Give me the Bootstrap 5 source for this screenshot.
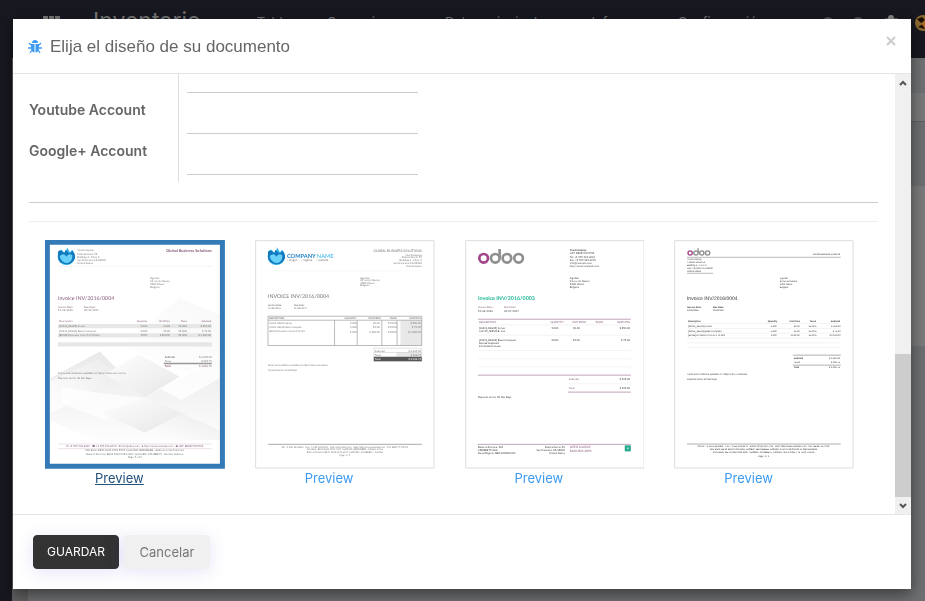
<!DOCTYPE html>
<html lang="es">
<head>
<meta charset="utf-8">
<meta name="viewport" content="width=device-width, initial-scale=1">
<title>Elija el diseño de su documento</title>
<link href="https://cdn.jsdelivr.net/npm/bootstrap@5.3.0/dist/css/bootstrap.min.css" rel="stylesheet">
<style>
body{font-family:Inter,"Open Sans",sans-serif;font-size:13px;color:#666;background:#6e7072;overflow:hidden}
.app-bar{background:#181821;height:58px;color:#777;font-size:13px;padding:15px 0 0 43px;white-space:nowrap}
.app-bar a{color:inherit;text-decoration:none;line-height:20px}
.app-bar .brand-name{font-size:23px;line-height:20px;margin:-4px 56px 0 33px}
.app-links{gap:24px;margin-top:-3px}
.app-bar svg{flex:none}
.app-side{width:12px;background:#181821}
.app-gutter{width:16px;background:#606060}
.app-tools{height:64px;background:#7b7b7b;border-bottom:1px solid #606060;border-top:35px solid #707274}
.app-sheet{margin-top:64px;height:160px;background:#7c7c7c}
.doc-dialog{max-width:none;margin:19px 14px 12px 13px;height:calc(100% - 31px)}
.doc-dialog .modal-content{border:0;border-radius:0;height:100%;box-shadow:0 5px 15px rgba(0,0,0,.5);color:#666}
.doc-dialog .modal-header{height:55px;padding:2px 15px 0;border-bottom:1px solid #e5e5e5;border-radius:0}
.doc-dialog .modal-title{font:400 17px/24px "Liberation Sans",Arial,sans-serif;color:#666}
.close-x{border:0;background:none;padding:0;color:#ccc;line-height:0;margin:0 0 12px}
.doc-dialog .modal-body{padding:0;overflow:hidden}
.doc-scroll{padding:0 17px 0 16px}
.labels-col{width:150px;border-right:1px solid #ddd;padding-top:19px}
.labels-col label{font-size:14px;font-weight:600;height:41px;line-height:33px;display:block;white-space:nowrap}
.fields-col{width:239px;padding:0 0 7px 8px}
.fields-col input{display:block;width:100%;height:41px;border:0;border-bottom:1px solid #ccc;border-radius:0;outline:0}
.fields-col input.cut{height:19px}
.rule-a{margin:20px 0 18px;border-top:1px solid #ccc;opacity:1}
.rule-b{margin:0 0 18px;border-top:1px solid #eee;opacity:1}
.layouts{margin:0 9px 0 1px}
.layouts .col-3{padding:0 15px}
.layouts svg{display:block;width:100%;height:auto;background:#fff}
.layouts a{display:inline-block;color:#3d9cf2;text-decoration:none;font-size:13px;line-height:18px;margin-right:31px}
.layouts a.picked{color:#23527c;text-decoration:underline}
.bar-track{width:16px;background:#f0f0f0}
.bar-track button{border:0;background:none;padding:0;height:17px;width:16px;line-height:0}
.bar-thumb{background:#cdcdcd;height:143px}
.doc-dialog .modal-footer{height:75px;padding:0 20px;border-top:1px solid #e5e5e5;border-radius:0;gap:5px}
.btn-doc{font-size:12px;line-height:20px;height:34px;min-width:86px;padding:6px 13px;margin:0;border:1px solid #333;border-radius:4px;background:#333;color:#fff;box-shadow:0 3px 18px rgba(88,60,200,.14)}
.btn-doc.soft{font-size:13px;background:#f0f0f0;border-color:#f0f0f0;color:#777}
.doc-art{font-family:Lato,sans-serif;font-size:8px;fill:#777;text-rendering:geometricPrecision}
.doc-art .e{text-anchor:end}
.doc-art .m{text-anchor:middle}
.doc-art .b{font-weight:700}
.doc-art .p{fill:#875a7b}
.doc-art .logo-name{font-size:17px;font-weight:700;fill:#2585c7}
.doc-art.sans{font-family:"Liberation Sans",Arial,sans-serif}
</style>
</head>
<body>
<div class="vh-100 d-flex flex-column">
  <nav class="app-bar d-flex align-items-start">
    <svg width="17" height="17" viewBox="0 0 17 17" fill="#777"><path d="M0 1h5v4H0zM6 1h5v4H6zM12 1h5v4h-5zM0 7h5v4H0zM6 7h5v4H6zM12 7h5v4h-5z"/></svg>
    <a href="#" class="brand-name">Inventario</a>
    <div class="app-links d-flex flex-fill">
      <a href="#">Tablero</a><a href="#" class="me-3">Operaciones</a><a href="#" class="me-3">Datos principales</a><a href="#" class="me-2">Informes</a><a href="#">Configuración</a>
    </div>
    <svg width="104" height="18" viewBox="0 0 104 18"><g fill="none" stroke="#555" stroke-width="2"><circle cx="7" cy="8" r="5"/><circle cx="37" cy="8" r="5"/></g><path d="M64 3h13v3H64z" fill="#555"/><circle cx="70" cy="3" r="3" fill="#888"/><circle cx="102" cy="8" r="8" fill="#8b6b30"/><path d="M96 4l5-2 3 3-4 3zM97 12l5-3 2 5z" fill="#1c0d02"/><path d="M101 10l3-5v8z" fill="#b4651c"/></svg>
  </nav>
  <div class="d-flex flex-fill">
    <div class="app-side"></div><div class="app-gutter"></div>
    <div class="flex-fill"><div class="app-tools"></div><div class="app-sheet"></div></div>
  </div>
</div>

<div class="modal d-block overflow-hidden" role="dialog" aria-labelledby="dlgTitle">
<div class="modal-dialog doc-dialog">
<div class="modal-content">
  <div class="modal-header d-flex align-items-center justify-content-between">
    <div class="d-flex align-items-center">
      <svg class="me-2" width="14" height="14" viewBox="0 0 14 14"><path d="M4 3a3 3 0 0 1 6 0zM3 4h3.500v8.500Q3 12 3 8zM7.500 4H11v4q0 4-3.500 4.500z" fill="#3d9cf2"/><path d="M3 5L1 3M11 5l2-2M3 8H0M11 8h3M4 10l-2 3M10 10l2 3" stroke="#3d9cf2" stroke-width="1.300" fill="none"/></svg>
      <h4 class="modal-title" id="dlgTitle">Elija el diseño de su documento</h4>
    </div>
    <button class="close-x" type="button" aria-label="Cerrar"><svg width="10" height="10" viewBox="0 0 10 10"><path d="M1 1l8 8M9 1L1 9" stroke="#ccc" stroke-width="2"/></svg></button>
  </div>
  <div class="modal-body d-flex">
    <div class="doc-scroll flex-fill">
      <div class="d-flex">
        <div class="labels-col"><label for="yt">Youtube Account</label><label for="gp">Google+ Account</label></div>
        <div class="fields-col"><input class="cut" type="text" aria-label="Account"><input id="yt" type="text"><input id="gp" type="text"></div>
      </div>
      <hr class="rule-a"><hr class="rule-b">
      <div class="layouts row text-center">
        <div class="col-3">
          <svg class="doc-art" viewBox="15 15 540 687">
            <defs>
              <linearGradient id="fade" x1="0" y1="0" x2="1" y2="1"><stop offset="0" stop-color="#fff"/><stop offset="1" stop-color="#e6e6e6"/></linearGradient>
              <linearGradient id="fadeDown" x1="0" y1="0" x2="0" y2="1"><stop offset="0" stop-color="#e9e9e9"/><stop offset="1" stop-color="#fff"/></linearGradient>
              <linearGradient id="fadeUp" x1="0" y1="1" x2="1" y2="0"><stop offset="0" stop-color="#fff"/><stop offset="1" stop-color="#ececec"/></linearGradient>
              <g id="drop"><circle cx="79" cy="64" r="26" fill="#35b4ee"/><path d="M50 38h58v14l-8-12-10 12-8-14-8 16-14-14-10 8z" fill="#fff"/><path d="M54 50q8-8 18 4 4-2 3-9 8 2 11 10 8 0 11-8 10 10 8 23-9 20-28 18-22-4-23-22z" fill="#1279be"/><path d="M59 63q14-11 20 2 8-12 18-4 2 18-16 24-18-2-22-22z" fill="#69d0f8"/></g>
              <g id="odoo" fill="none" stroke="#8f8f8f" stroke-width="8"><circle cx="71" cy="70" r="13" stroke="#a24689"/><circle cx="106" cy="70" r="13"/><path d="M119 42v28"/><circle cx="141" cy="70" r="13"/><circle cx="176" cy="70" r="13"/></g>
            </defs>
            <path d="M30 30h510v657H30z" fill="#fff"/>
            <path d="M250 330L420 190 540 240V440L400 400z" fill="url(#fadeUp)" opacity=".35"/>
            <path d="M30 430l150-80 135 138 110-58 115-66v220q-110 40-230 60-160-20-280-90z" fill="url(#fadeDown)"/>
            <path d="M30 440l145-65 50 40-90 70-105 50z" fill="url(#fadeUp)"/>
            <path d="M65 455l115 20 135 15-120 66-130-50z" fill="#fff" opacity=".7"/>
            <path d="M195 418l100-60 125 68-105 62z" fill="url(#fade)"/>
            <path d="M185 535l130-47 120 50-120 56z" fill="url(#fade)"/>
            <path d="M420 426l120-66v70l-115 66-62-32z" fill="#fff" opacity=".8"/>
            <path d="M315 594l110-58 115 50v30H370z" fill="url(#fadeUp)"/>
            <use href="#drop"/>
            <text><tspan x="112" y="49">YourCompany</tspan><tspan x="112" y="59">Federal Street 51</tspan><tspan x="112" y="68">Building 2 - Floor 2</tspan><tspan x="112" y="78">San Francisco CA 94000</tspan><tspan x="112" y="87">United States</tspan></text>
            <text class="e p b" x="516" y="52" font-size="12">Global Business Solutions</text>
            <path d="M54 94h462" stroke="#ddd"/>
            <text><tspan x="331" y="132">Agrolait</tspan><tspan x="331" y="141">69 rue de Namur</tspan><tspan x="331" y="151">1300 Wavre</tspan><tspan x="331" y="160">Belgium</tspan></text>
            <text class="p" x="54" y="196" font-size="16">Invoice INV/2016/0004</text>
            <text><tspan class="p" x="54" y="220">Invoice Date:</tspan><tspan class="p" x="132" y="220">Due Date:</tspan><tspan x="54" y="229">12/28/2016</tspan><tspan x="132" y="229">01/28/2017</tspan></text>
            <path d="M54 267h462v13H54zM54 295h462v13H54zM54 322h462v13H54z" fill="#ddd" opacity=".7"/>
            <g class="p"><text x="57" y="262">Description</text><text class="e" x="322" y="262">Quantity</text><text class="e" x="391" y="262">Unit Price</text><text class="e" x="442" y="262">Taxes</text><text class="e" x="514" y="262">Subtotal</text></g>
            <text><tspan x="57" y="276">[CONS_DEL01] Server</tspan><tspan x="57" y="290">[CONS_DEL03] Basic Computer</tspan><tspan x="57" y="304">[EPUB] Processor Core i5 2.70 Ghz</tspan></text>
            <g id="nums"><text class="e"><tspan x="322" y="276">5.000</tspan><tspan x="322" y="290">5.000</tspan><tspan x="322" y="304">1.000</tspan></text><text class="e"><tspan x="391" y="276">90.00</tspan><tspan x="391" y="290">15.00</tspan><tspan x="391" y="304">2,100.00</tspan></text><text class="e"><tspan x="442" y="276">15.00%</tspan><tspan x="442" y="290">15.00%</tspan><tspan x="442" y="304">15.00%</tspan></text><text class="e"><tspan x="514" y="276">$ 450.00</tspan><tspan x="514" y="290">$ 75.00</tspan><tspan x="514" y="304">$ 2,100.00</tspan></text></g>
            <path d="M372 386h144" stroke="#999" stroke-width="4"/>
            <text><tspan class="b" x="375" y="370">Subtotal</tspan><tspan x="375" y="383">Taxes</tspan><tspan class="p b" x="375" y="398">Total</tspan></text>
            <text class="e"><tspan x="516" y="370">$ 2,625.00</tspan><tspan x="516" y="383">$ 393.75</tspan><tspan class="p" x="516" y="398">$ 3,018.75</tspan></text>
            <text><tspan x="54" y="419">Terms and conditions available on https://odoo.com/terms</tspan><tspan x="54" y="433">Payment terms: 30 Net Days</tspan></text>
            <path d="M54 628h462M54 642h462" stroke="#bea3b6"/>
            <text class="m p" x="285" y="638">✆ +1 555 123 8069 &#160; ☎ +1 555 123 8070 &#160; ✉ info@odoo.com &#160; ● http://www.example.com &#160; ▣ VAT: BE0477472701</text>
            <text class="m"><tspan x="285" y="650">ING Bank: BE10 3631 0709 4104, SwiftCBIC: BBRUBEBB - Address in San Francisco</tspan><tspan x="285" y="660">Bank of America: BE74 1262 0121 6907, SwiftCBIC: CPHBBE75 - Another Address</tspan><tspan x="285" y="669">Page: 1 of 1</tspan></text>
            <path d="M22 22h526v673H22z" fill="none" stroke="#337ab7" stroke-width="15"/>
          </svg>
          <a href="#" class="picked">Preview</a>
        </div>
        <div class="col-3">
          <svg class="doc-art" viewBox="15 15 540 687">
            <use href="#drop"/>
            <text class="logo-name" x="111" y="68">COMPANY <tspan font-weight="400" fill="#35b4ee">NAME</tspan></text>
            <text x="111" y="79" font-size="9">/ slogan &#160; &#160; / tagline &#160; &#160; / website</text>
            <text class="e" x="516" y="51" font-size="10">GLOBAL BUSINESS SOLUTIONS</text>
            <text class="e"><tspan x="516" y="62">YourCompany</tspan><tspan x="516" y="70">Federal Street 51</tspan><tspan x="516" y="79">Building 2 - Floor 2</tspan><tspan x="516" y="87">San Francisco CA 94000</tspan><tspan x="516" y="95">United States</tspan></text>
            <path d="M54 107h462" stroke="#eee"/>
            <text><tspan x="331" y="131">Agrolait</tspan><tspan x="331" y="138">69 rue de Namur</tspan><tspan x="331" y="146">1300 Wavre</tspan><tspan x="331" y="154">Belgium</tspan></text>
            <text x="54" y="190" font-size="16">INVOICE INV/2016/0004</text>
            <text font-size="7"><tspan class="b" x="54" y="213">Invoice Date:</tspan><tspan class="b" x="132" y="213">Due Date:</tspan><tspan x="54" y="221">12/28/2016</tspan><tspan x="132" y="221">01/28/2017</tspan></text>
            <path d="M452 256h64v76h-64z" fill="#e8e8e8"/>
            <path d="M54 244h462v88H54zM54 256h462M254 256v76M322 256v76M396 256v76M442 256v76" fill="none" stroke="#999" stroke-width="2"/>
            <g class="b" font-size="7"><text x="57" y="253">DESCRIPTION</text><text class="e" x="320" y="253">QUANTITY</text><text class="e" x="393" y="253">UNIT PRICE</text><text class="e" x="441" y="253">TAXES</text><text class="e" x="514" y="253">SUBTOTAL</text></g>
            <text font-size="7"><tspan x="57" y="267">[CONS_DEL01] Server</tspan><tspan x="57" y="279">[CONS_DEL03] Basic Computer</tspan><tspan x="57" y="291">[EPUB] Processor Core i5 2.70 Ghz</tspan></text>
            <g transform="translate(-1 -10)"><use href="#nums"/></g>
            <path d="M440 353h76v13h-76z" fill="#e8e8e8"/><path d="M372 340h144v39H372zM372 353h144" fill="none" stroke="#aaa"/><path d="M372 366h144v13H372z" fill="#555"/>
            <text><tspan x="375" y="350">Subtotal</tspan><tspan x="375" y="362">Taxes</tspan><tspan x="375" y="376" fill="#fff">Total</tspan></text>
            <text class="e"><tspan x="514" y="350">$ 2,625.00</tspan><tspan x="514" y="362">$ 393.75</tspan><tspan x="514" y="376" fill="#fff">$ 3,018.75</tspan></text>
            <text font-size="7"><tspan x="54" y="395">Terms and conditions available on: https://odoo.com/terms</tspan><tspan x="54" y="408">Payment terms: 30 Net Days</tspan></text>
            <path d="M54 629h462" stroke="#bbb" stroke-width="4"/>
            <text class="m" font-size="7"><tspan x="285" y="639">Tel: +1 555 123 8069 &#160; Fax: +1 555 123 8070 &#160; Mail: info@odoo.com &#160; Web: http://www.example.com &#160; VAT: BE0477472701</tspan><tspan x="285" y="647">ING Bank: BE10 3631 0709 4104, SwiftCBIC: BBRUBEBB - Address in San</tspan><tspan x="285" y="656">Bank of America: BE74 1262 0121 6907, SwiftCBIC: CPHBBE75 - Another</tspan><tspan x="285" y="664">Page: 1 / 1</tspan></text>
            <path d="M17 17h536v683H17z" fill="none" stroke="#ddd" stroke-width="3"/>
          </svg>
          <a href="#">Preview</a>
        </div>
        <div class="col-3">
          <svg class="doc-art" viewBox="15 15 540 687">
            <use href="#odoo"/>
            <g fill="#444"><text><tspan class="b" x="330" y="49">YourCompany</tspan><tspan x="330" y="58">VAT: BE0477472701</tspan><tspan x="330" y="68">Tel: +1 555 123 8069</tspan><tspan x="330" y="78">Fax: +1 555 123 8070</tspan><tspan x="330" y="87">info@example.com</tspan><tspan x="330" y="97">http://www.example.com</tspan><tspan x="330" y="132">Agrolait</tspan><tspan x="330" y="141">69 rue de Namur</tspan><tspan x="330" y="151">1300 Wavre</tspan><tspan x="330" y="160">Belgium</tspan></text></g>
            <text class="b" x="54" y="196" font-size="16" fill="#21b799">Invoice INV/2016/0003</text>
            <text><tspan class="p" x="54" y="220">Invoice Date:</tspan><tspan class="p" x="132" y="220">Due Date:</tspan><tspan x="54" y="230" fill="#444">12/08/2016</tspan><tspan x="132" y="230" fill="#444">01/07/2017</tspan></text>
            <path d="M54 253h459M54 421h459M324 472h189M54 629h459" stroke="#c3a3ba" stroke-width="3"/>
            <path d="M54 270h459M54 301h459M54 347h459M54 372h459M54 396h459M324 447h189" stroke="#ddd"/>
            <g class="p"><text x="57" y="264">DESCRIPTION</text><text class="e" x="312" y="264">QUANTITY</text><text class="e" x="379" y="264">UNIT PRICE</text><text class="e" x="430" y="264">TAXES</text><text class="e" x="511" y="264">SUBTOTAL</text></g>
            <g fill="#333"><text><tspan x="57" y="283">[CONS_DEL01] Server</tspan><tspan x="57" y="292">cod: 05_SERVICE: non</tspan><tspan x="57" y="318">[CONS_DEL03] Basic Computer</tspan><tspan x="57" y="327">Dvorak keyboard</tspan><tspan x="57" y="336">left-handed mouse</tspan></text>
            <text class="e"><tspan x="295" y="283">5.000</tspan><tspan x="360" y="283">90.00</tspan><tspan x="511" y="283">$ 450.00</tspan><tspan x="295" y="318">5.000</tspan><tspan x="360" y="318">15.00</tspan><tspan x="511" y="318">$ 75.00</tspan><tspan x="511" y="437">$ 525.00</tspan><tspan x="511" y="463">$ 525.00</tspan></text>
            <text x="54" y="489">Payment terms: 30 Net Days</text>
            <text><tspan x="54" y="639">Bank of America: 123</tspan><tspan x="54" y="649">CPHBBE75-XXX</tspan><tspan x="54" y="659">Fiscal Regime: BE0 0000000 00</tspan></text><text class="e"><tspan x="315" y="639">Federal Street 51</tspan><tspan x="315" y="649">San Francisco CA 94000</tspan><tspan x="315" y="659">United States</tspan></text></g>
            <text class="p"><tspan x="327" y="437">Subtotal</tspan><tspan x="327" y="463">Total</tspan></text>
            <text class="p" font-size="9"><tspan x="330" y="641">OPEN SOURCE</tspan><tspan x="330" y="651">BUSINESS APPS</tspan></text>
            <path d="M495 632h18v18h-18z" fill="#21a68a"/><path d="M501 638h6v6h-6z" fill="#8ee0cd"/>
            <path d="M17 17h536v683H17z" fill="none" stroke="#ddd" stroke-width="3"/>
          </svg>
          <a href="#">Preview</a>
        </div>
        <div class="col-3">
          <svg class="doc-art sans" viewBox="12 15 540 687">
            <g transform="translate(25 19) scale(.5)"><use href="#odoo"/></g>
            <path d="M51 67h462M51 115h79" stroke="#999" stroke-width="2"/>
            <g fill="#333"><text font-size="7"><tspan x="51" y="74">YourCompany</tspan><tspan x="51" y="83">Federal Street 51</tspan><tspan x="51" y="92">Building 2 - Floor 2</tspan><tspan x="51" y="102">San Francisco CA 94000</tspan><tspan x="51" y="111">United States</tspan></text>
            <text class="e" x="511" y="59" font-size="7">Global Business Solutions</text>
            <text font-size="7"><tspan x="330" y="132">Agrolait</tspan><tspan x="330" y="141">69 rue de Namur</tspan><tspan x="330" y="151">1300 Wavre</tspan><tspan x="330" y="160">Belgium</tspan></text>
            <text x="51" y="195" font-size="15">Invoice INV/2016/0004</text>
            <text font-size="7"><tspan class="b" x="51" y="220">Invoice Date:</tspan><tspan class="b" x="129" y="220">Due Date:</tspan><tspan x="51" y="229">12/28/2016</tspan><tspan x="129" y="229">01/28/2017</tspan></text>
            <g class="b" font-size="7"><text x="54" y="262">Description</text><text class="e" x="322" y="262">Quantity</text><text class="e" x="391" y="262">Unit Price</text><text class="e" x="439" y="262">Taxes</text><text class="e" x="511" y="262">Subtotal</text></g>
            <text font-size="7"><tspan x="54" y="276">[CONS_DEL01] Server</tspan><tspan x="54" y="290">[CONS_DEL03] Basic Computer</tspan><tspan x="54" y="304">[EPUB] Processor Core i5 2.70 Ghz</tspan></text>
            <g transform="translate(-2 0)" font-size="7"><use href="#nums"/></g>
            <text font-size="7"><tspan class="b" x="372" y="373">Subtotal</tspan><tspan x="372" y="386">Taxes</tspan><tspan class="b" x="372" y="400">Total</tspan></text>
            <text class="e" font-size="7"><tspan x="511" y="373">$ 2,625.00</tspan><tspan x="511" y="386">$ 393.75</tspan><tspan x="511" y="400">$ 3,018.75</tspan></text>
            <text font-size="7"><tspan x="51" y="422">Terms and conditions available on: https://odoo.com/terms</tspan><tspan x="51" y="436">Payment terms: 30 Net Days</tspan></text>
            <text class="m" font-size="7"><tspan x="281" y="636">Phone: +1 555 123 8069 &#160; Fax: +1 555 123 8070 &#160; Email: info@odoo.com &#160; Web: http://www.example.com &#160; VAT: BE0477472701</tspan><tspan x="281" y="646">ING Bank: BE10 3631 0709 4104, SwiftBIC: BBRUBEBB, Address: Court St Michel 99, B 1040 Brussels</tspan><tspan x="281" y="656">CPH Bank: BE74 1262 0121 6907, SwiftBIC: CPHBBE75, Address: Rue Perdue 7, B 7500 Tournai</tspan><tspan x="281" y="666">Page: 1 / 1</tspan></text></g>
            <path d="M51 266h462M51 281h462M51 295h462M51 310h462M51 324h462M51 338h462" stroke="#ddd"/>
            <path d="M369 361h144M369 391h144M51 628h462" stroke="#888" stroke-width="2"/>
            <path d="M14 17h536v683H14z" fill="none" stroke="#ddd" stroke-width="3"/>
          </svg>
          <a href="#">Preview</a>
        </div>
      </div>
    </div>
    <div class="bar-track d-flex flex-column">
      <button type="button" aria-label="Subir"><svg width="16" height="17" viewBox="0 0 16 17"><path d="M5 11l3-3 3 3" fill="none" stroke="#555" stroke-width="2"/></svg></button>
      <div class="bar-thumb mt-auto"></div>
      <button type="button" aria-label="Bajar"><svg width="16" height="17" viewBox="0 0 16 17"><path d="M5 7l3 3 3-3" fill="none" stroke="#555" stroke-width="2"/></svg></button>
    </div>
  </div>
  <div class="modal-footer justify-content-start">
    <button type="button" class="btn btn-doc">GUARDAR</button>
    <button type="button" class="btn btn-doc soft">Cancelar</button>
  </div>
</div>
</div>
</div>
<script src="https://cdn.jsdelivr.net/npm/bootstrap@5.3.0/dist/js/bootstrap.bundle.min.js"></script>
</body>
</html>
